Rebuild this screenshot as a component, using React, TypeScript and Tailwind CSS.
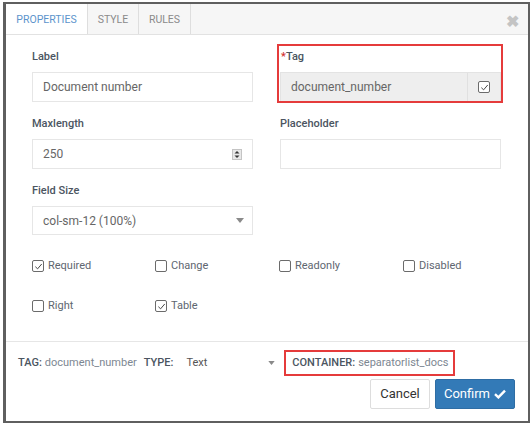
import React from "react";

const Check = ({ checked }: { checked?: boolean }) => (
  <span className="flex h-[12px] w-[12px] items-center justify-center rounded-[2px] border border-[#6b6b6b] bg-white">
    {checked && (
      <svg width="9" height="9" viewBox="0 0 10 10">
        <path d="M1.5 5.2 L4 7.6 L8.6 2.2" fill="none" stroke="#444" strokeWidth="1.1" />
      </svg>
    )}
  </span>
);

const CB = ({ label, checked }: { label: string; checked?: boolean }) => (
  <div className="flex h-[16px] items-center">
    <Check checked={checked} />
    <span className="ml-[4px] text-[11px] text-[#5e6670]">{label}</span>
  </div>
);

const Label = ({ children }: { children: React.ReactNode }) => (
  <div className="h-[16px] text-[11px] font-medium leading-[16px] text-[#4b5561]">{children}</div>
);

export default function App() {
  return (
    <div className="h-[425px] w-[531px] bg-white pl-[3px] pt-[2px]" style={{ fontFamily: "Roboto, 'Liberation Sans', sans-serif" }}>
      <div className="relative flex h-[421px] w-[527px] flex-col border-[2px] border-l-[3px] border-[#5f5f5f] bg-white">
        {/* tabs */}
        <div className="flex h-[31px] items-stretch border-b border-[#e2e2e2] bg-[#f6f6f6]">
          <div className="flex w-[82px] items-center justify-center border-r border-[#dedede] bg-white pt-[2px] text-[10.5px] text-[#5d94cc]">PROPERTIES</div>
          <div className="flex w-[51px] items-center justify-center border-r border-[#dedede] pt-[2px] text-[10.5px] text-[#8a8a8a]">STYLE</div>
          <div className="flex w-[52px] items-center justify-center border-r border-[#dedede] pt-[2px] text-[10.5px] text-[#8a8a8a]">RULES</div>
          <div className="flex-1" />
          <div className="flex w-[32px] items-center justify-center pt-[5px] text-[16px] font-bold text-[#c4c4c4]">✖</div>
        </div>

        {/* body */}
        <div className="pl-[26px] pr-[24px] pt-[14px]">
          <div className="grid grid-cols-[221px_221px] gap-x-[27px] gap-y-[14px]">
            <div>
              <Label>Label</Label>
              <div className="mt-[7px] flex h-[30px] items-center border border-[#e6e6e6] px-[10px] text-[12px] text-[#666]">Document number</div>
            </div>
            <div className="relative">
              <div className="absolute left-[-3px] right-[-2px] top-[-5px] bottom-[-1px] border-[2px] border-[#e53b3b]" />
              <div className="h-[16px] pl-[1px] text-[11px] font-medium leading-[16px] text-[#4b5561]">
                <span className="text-[#d32f2f]">*</span>Tag
              </div>
              <div className="mt-[7px] flex h-[30px] border border-[#e3e3e3] bg-[#eeeeee]">
                <div className="flex flex-1 items-center px-[10px] text-[12px] text-[#666]">document_number</div>
                <div className="flex w-[33px] items-center justify-center border-l border-[#e0e0e0]">
                  <Check checked />
                </div>
              </div>
            </div>
            <div>
              <Label>Maxlength</Label>
              <div className="mt-[7px] flex h-[30px] items-center justify-between border border-[#e6e6e6] pl-[10px] pr-[10px] text-[12px] text-[#666]">
                <span>250</span>
                <svg width="10" height="11" viewBox="0 0 10 11">
                  <rect x="0.5" y="0.5" width="9" height="10" fill="#e8e8e8" stroke="#c4c4c4" />
                  <path d="M2.5 4.5 L5 2 L7.5 4.5 Z" fill="#333" />
                  <path d="M2.5 6.5 L5 9 L7.5 6.5 Z" fill="#333" />
                </svg>
              </div>
            </div>
            <div>
              <Label>Placeholder</Label>
              <div className="mt-[7px] h-[30px] border border-[#e6e6e6]" />
            </div>
            <div>
              <Label>Field Size</Label>
              <div className="mt-[7px] flex h-[29px] items-center justify-between border border-[#e6e6e6] pl-[10px] pr-[8px] text-[12px] text-[#666]">
                <span>col-sm-12 (100%)</span>
                <svg width="8" height="5" viewBox="0 0 8 5"><path d="M0 0 L8 0 L4 5 Z" fill="#8a8a8a" /></svg>
              </div>
            </div>
            <div />
          </div>

          <div className="mt-[23px] grid grid-cols-[123px_124px_124px_1fr] gap-y-[24px]">
            <CB label="Required" checked />
            <CB label="Change" />
            <CB label="Readonly" />
            <CB label="Disabled" />
            <CB label="Right" />
            <CB label="Table" checked />
          </div>
        </div>

        {/* footer */}
        <div className="mt-[27px] border-t border-[#e6e6e6] pl-[12px] pr-[13px] pt-[8px]">
          <div className="flex h-[26px] items-center text-[11px]">
            <span className="font-medium text-[#4b5561]">TAG:</span>
            <span className="ml-[3px] text-[#7d8792]">document_number</span>
            <span className="ml-[7px] font-medium text-[#4b5561]">TYPE:</span>
            <span className="ml-[13px] text-[#555]">Text</span>
            <svg className="ml-[61px]" width="7" height="4" viewBox="0 0 8 5"><path d="M0 0 L8 0 L4 5 Z" fill="#8a8a8a" /></svg>
            <div className="ml-[9px] flex h-[26px] items-center border-[2px] border-[#e53b3b] pl-[6px] pr-[5px]">
              <span className="font-medium text-[#4b5561]">CONTAINER:</span>
              <span className="ml-[3px] text-[#7d8792]">separatorlist_docs</span>
            </div>
          </div>
          <div className="mt-[3px] flex justify-end gap-[5px]">
            <div className="flex h-[30px] w-[60px] items-center justify-center rounded-[2px] border border-[#dddddd] bg-white text-[13px] text-[#333]">Cancel</div>
            <div className="flex h-[30px] w-[80px] items-center justify-center gap-[4px] rounded-[2px] border border-[#2e6da4] bg-[#337ab7] text-[13px] text-white">
              Confirm
              <svg width="12" height="10" viewBox="0 0 12 10"><path d="M1 5.2 L4.4 8.4 L11 1.6" fill="none" stroke="white" strokeWidth="2.4" /></svg>
            </div>
          </div>
        </div>
      </div>
    </div>
  );
}
